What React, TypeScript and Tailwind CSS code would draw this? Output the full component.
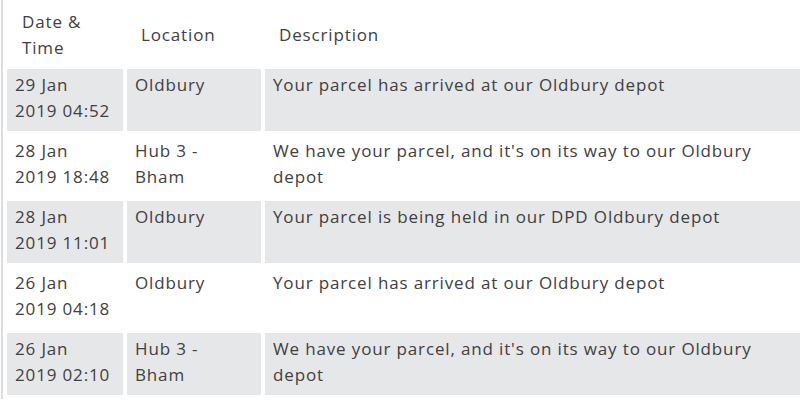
const events = [
  { date: '29 Jan', time: '2019 04:52', location: 'Oldbury', description: 'Your parcel has arrived at our Oldbury depot' },
  { date: '28 Jan', time: '2019 18:48', location: 'Hub 3 - Bham', description: "We have your parcel, and it's on its way to our Oldbury depot" },
  { date: '28 Jan', time: '2019 11:01', location: 'Oldbury', description: 'Your parcel is being held in our DPD Oldbury depot' },
  { date: '26 Jan', time: '2019 04:18', location: 'Oldbury', description: 'Your parcel has arrived at our Oldbury depot' },
  { date: '26 Jan', time: '2019 02:10', location: 'Hub 3 - Bham', description: "We have your parcel, and it's on its way to our Oldbury depot" },
];

export default function App() {
  return (
    <div className="h-[400px] w-[800px] overflow-hidden bg-white font-['Open_Sans',sans-serif] text-[17px] leading-[26px] tracking-[0.85px] text-[#414042]">
      <div className="ml-[1px] border-l-2 border-[#dcdcdc]">
        <table className="w-[830px] table-fixed border-separate border-spacing-[4px]">
          <colgroup>
            <col className="w-[116px]" />
            <col className="w-[134px]" />
            <col />
          </colgroup>
          <thead>
            <tr className="h-[61px]">
              <th className="px-[15px] text-left align-middle font-normal">Date &amp; Time</th>
              <th className="px-[14px] text-left align-middle font-normal">Location</th>
              <th className="px-[14px] text-left align-middle font-normal">Description</th>
            </tr>
          </thead>
          <tbody>
            {events.map((e, i) => {
              const bg = i % 2 === 0 ? 'bg-[#e6e7e8]' : 'bg-white';
              return (
                <tr key={i} className="h-[62px]">
                  <td className={`${bg} px-2 pt-[3px] align-top`}>
                    {e.date}
                    <br />
                    {e.time}
                  </td>
                  <td className={`${bg} pl-2 pr-5 pt-[3px] align-top`}>{e.location}</td>
                  <td className={`${bg} px-2 pt-[3px] pr-10 align-top`}>{e.description}</td>
                </tr>
              );
            })}
          </tbody>
        </table>
      </div>
    </div>
  );
}
